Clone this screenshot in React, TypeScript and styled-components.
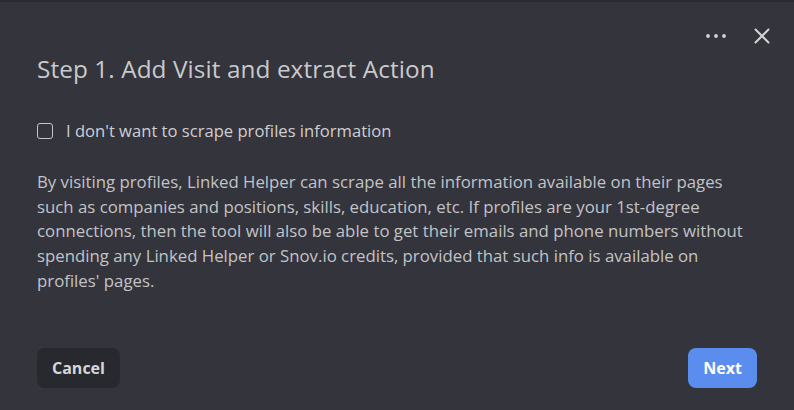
import styled, { createGlobalStyle } from 'styled-components'

const GlobalStyle = createGlobalStyle`
    html, body {
        margin: 0;
        padding: 0;
        background: #33343c;
    }
    * {
        box-sizing: border-box;
    }
`

const bodyLines = [
    'By visiting profiles, Linked Helper can scrape all the information available on their pages',
    'such as companies and positions, skills, education, etc. If profiles are your 1st-degree',
    'connections, then the tool will also be able to get their emails and phone numbers without',
    'spending any Linked Helper or Snov.io credits, provided that such info is available on',
    "profiles' pages.",
]

export default function App() {
    return (
        <>
            <GlobalStyle />
            <Dialog>
                <TopEdge />
                <Header>
                    <IconButton aria-label="More">
                        <svg width="20" height="4" viewBox="0 0 20 4">
                            <circle cx="2" cy="2" r="1.9" fill="#d4d4d6" />
                            <circle cx="10" cy="2" r="1.9" fill="#d4d4d6" />
                            <circle cx="18" cy="2" r="1.9" fill="#d4d4d6" />
                        </svg>
                    </IconButton>
                    <IconButton aria-label="Close">
                        <svg width="16" height="16" viewBox="0 0 16 16">
                            <path d="M1.5 1.5 L14.5 14.5 M14.5 1.5 L1.5 14.5" stroke="#d4d4d6" strokeWidth="2" strokeLinecap="round" />
                        </svg>
                    </IconButton>
                </Header>
                <Title>Step 1. Add Visit and extract Action</Title>
                <CheckRow>
                    <Box />
                    <span>I don't want to scrape profiles information</span>
                </CheckRow>
                <Body>
                    {bodyLines.map((line) => (
                        <Line key={line}>{line}</Line>
                    ))}
                </Body>
                <Footer>
                    <Button variant="secondary">Cancel</Button>
                    <Button variant="primary">Next</Button>
                </Footer>
            </Dialog>
        </>
    )
}

const Dialog = styled.div`
    width: 794px;
    height: 410px;
    background: #33343c;
    font-family: "Open Sans", Lato, sans-serif;
    display: flex;
    flex-direction: column;
    padding: 0 37px 22px 37px;
    position: relative;
`

const TopEdge = styled.div`
    position: absolute;
    top: 0;
    left: 0;
    right: 0;
    height: 2px;
    background: #2a2b31;
`

const Header = styled.div`
    display: flex;
    justify-content: flex-end;
    align-items: center;
    gap: 28px;
    margin-right: -13px;
    padding-top: 26px;
    height: 46px;
`

const IconButton = styled.button`
    border: none;
    background: none;
    padding: 0;
    height: 20px;
    display: flex;
    align-items: center;
    justify-content: center;
    cursor: pointer;
`

const Title = styled.h2`
    margin: 8px 0 0 0;
    font-size: 24.3px;
    font-weight: 400;
    color: #c9c9cc;
    line-height: 30px;
    letter-spacing: 0.1px;
`

const CheckRow = styled.label`
    display: flex;
    align-items: center;
    gap: 13px;
    margin-top: 36px;
    font-size: 16.6px;
    color: #cfcfd2;
    line-height: 22px;
`

const Box = styled.span`
    width: 16px;
    height: 16px;
    border: 1.5px solid #c4c4c8;
    border-radius: 3px;
    flex-shrink: 0;
`

const Body = styled.div`
    margin-top: 28px;
    font-size: 16.8px;
    line-height: 24.7px;
    color: #c3c3c7;
`

const Line = styled.div`
    white-space: nowrap;
`

const Footer = styled.div`
    margin-top: auto;
    display: flex;
    justify-content: space-between;
`

const Button = styled.button<{ variant: 'primary' | 'secondary' }>`
    height: 40px;
    border: none;
    border-radius: 8px;
    padding: 0 15px;
    font-family: inherit;
    font-size: 16px;
    font-weight: 700;
    cursor: pointer;
    background: ${({ variant }) => (variant === 'primary' ? '#5b8def' : '#28292e')};
    color: ${({ variant }) => (variant === 'primary' ? '#ffffff' : '#d6d6d9')};
`
